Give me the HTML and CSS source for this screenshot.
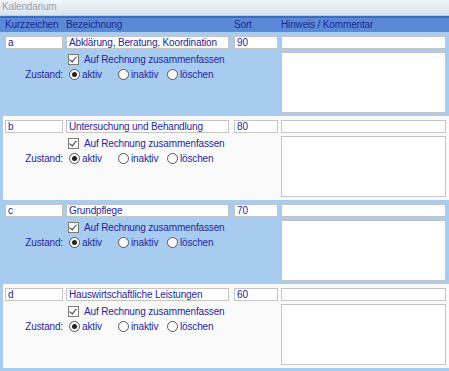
FILE: index.html
```html
<!DOCTYPE html>
<html lang="de">
<head>
    <meta charset="UTF-8">
    <title>Kalendarium</title>
    <link rel="stylesheet" href="styles.css">
</head>
<body>
    <div class="window">
        <div class="titlebar">Kalendarium</div>
        <div class="frame">
            <div class="head">
                <span>Kurzzeichen</span>
                <span>Bezeichnung</span>
                <span>Sort</span>
                <span>Hinweis / Kommentar</span>
            </div>

            <div class="record blue">
                <div class="field f-kurz">a</div>
                <div class="field f-bez">Abklärung, Beratung, Koordination</div>
                <div class="field f-sort">90</div>
                <div class="field f-hint"></div>
                <div class="memo"></div>
                <div class="opts">
                    <div class="check-row"><span class="box"></span>Auf Rechnung zusammenfassen</div>
                    <div class="state-row">
                        <span class="state-label">Zustand:</span>
                        <span class="opt"><span class="radio on"></span>aktiv</span>
                        <span class="opt"><span class="radio"></span>inaktiv</span>
                        <span class="opt"><span class="radio"></span>löschen</span>
                    </div>
                </div>
            </div>

            <div class="record white">
                <div class="field f-kurz">b</div>
                <div class="field f-bez">Untersuchung und Behandlung</div>
                <div class="field f-sort">80</div>
                <div class="field f-hint"></div>
                <div class="memo"></div>
                <div class="opts">
                    <div class="check-row"><span class="box"></span>Auf Rechnung zusammenfassen</div>
                    <div class="state-row">
                        <span class="state-label">Zustand:</span>
                        <span class="opt"><span class="radio on"></span>aktiv</span>
                        <span class="opt"><span class="radio"></span>inaktiv</span>
                        <span class="opt"><span class="radio"></span>löschen</span>
                    </div>
                </div>
            </div>

            <div class="record blue">
                <div class="field f-kurz">c</div>
                <div class="field f-bez">Grundpflege</div>
                <div class="field f-sort">70</div>
                <div class="field f-hint"></div>
                <div class="memo"></div>
                <div class="opts">
                    <div class="check-row"><span class="box"></span>Auf Rechnung zusammenfassen</div>
                    <div class="state-row">
                        <span class="state-label">Zustand:</span>
                        <span class="opt"><span class="radio on"></span>aktiv</span>
                        <span class="opt"><span class="radio"></span>inaktiv</span>
                        <span class="opt"><span class="radio"></span>löschen</span>
                    </div>
                </div>
            </div>

            <div class="record white">
                <div class="field f-kurz">d</div>
                <div class="field f-bez">Hauswirtschaftliche Leistungen</div>
                <div class="field f-sort">60</div>
                <div class="field f-hint"></div>
                <div class="memo"></div>
                <div class="opts">
                    <div class="check-row"><span class="box"></span>Auf Rechnung zusammenfassen</div>
                    <div class="state-row">
                        <span class="state-label">Zustand:</span>
                        <span class="opt"><span class="radio on"></span>aktiv</span>
                        <span class="opt"><span class="radio"></span>inaktiv</span>
                        <span class="opt"><span class="radio"></span>löschen</span>
                    </div>
                </div>
            </div>
        </div>
    </div>
</body>
</html>
```

FILE: styles.css
```css
body {
    margin: 0;
    font-family: "Liberation Sans", Arial, sans-serif;
    font-size: 10px;
    letter-spacing: -0.15px;
    background-color: #a8cbf0;
}

.window {
    width: 449px;
    height: 371px;
    overflow: hidden;
}

.titlebar {
    height: 15px;
    line-height: 13px;
    padding-left: 2px;
    color: #9aa3ad;
    font-size: 10px;
    background: linear-gradient(#f2f5f9, #d9e3ee);
    border-bottom: 1px solid #b9cde6;
}

.frame {
    border-top: 2px solid #3f6bbd;
    padding-left: 3px;
    background-color: #a8cbf0;
    height: 353px;
}

.head {
    display: grid;
    grid-template-columns: 61px 168px 47px 1fr;
    height: 14px;
    line-height: 13px;
    margin-left: -3px;
    padding-left: 5px;
    color: #1c2890;
    background-color: #5a89d8;
}

.record {
    display: grid;
    grid-template-columns: 61px 168px 47px 165px;
    grid-template-rows: 13px 61px;
    row-gap: 3px;
    height: 84px;
    box-sizing: border-box;
    padding: 4px 0 0 2px;
    color: #2626a0;
}

.record.blue {
    background-color: #a8cbf0;
}

.record.white {
    background-color: #fafafa;
}

.field {
    background-color: #fff;
    border: 1px solid #c4c4c4;
    line-height: 11px;
    padding-left: 2px;
    white-space: nowrap;
    overflow: hidden;
}

.f-kurz {
    margin-right: 3px;
}

.f-bez {
    margin-right: 5px;
}

.f-sort {
    margin-right: 3px;
}

.memo {
    grid-column: 4;
    grid-row: 2;
    background-color: #fff;
    border: 1px solid #c4c4c4;
}

.opts {
    grid-column: 1 / 4;
    grid-row: 2;
}

.check-row {
    display: flex;
    align-items: center;
    height: 12px;
    margin-top: 1px;
    padding-left: 63px;
}

.box {
    width: 9px;
    height: 9px;
    border: 1px solid #7a7a7a;
    background-color: #fff;
    margin-right: 5px;
    position: relative;
}

.box::after {
    content: "";
    position: absolute;
    left: 2px;
    top: 0;
    width: 3px;
    height: 6px;
    border: solid #333;
    border-width: 0 1px 1px 0;
    transform: rotate(40deg);
}

.state-row {
    display: flex;
    align-items: center;
    height: 12px;
    margin-top: 3px;
}

.state-label {
    width: 58px;
    text-align: right;
    margin-right: 6px;
}

.opt {
    display: flex;
    align-items: center;
    width: 49px;
}

.radio {
    width: 9px;
    height: 9px;
    border: 1px solid #555;
    border-radius: 50%;
    background-color: #fff;
    margin-right: 2px;
    position: relative;
}

.radio.on::after {
    content: "";
    position: absolute;
    left: 2px;
    top: 2px;
    width: 5px;
    height: 5px;
    border-radius: 50%;
    background-color: #222;
}
```
